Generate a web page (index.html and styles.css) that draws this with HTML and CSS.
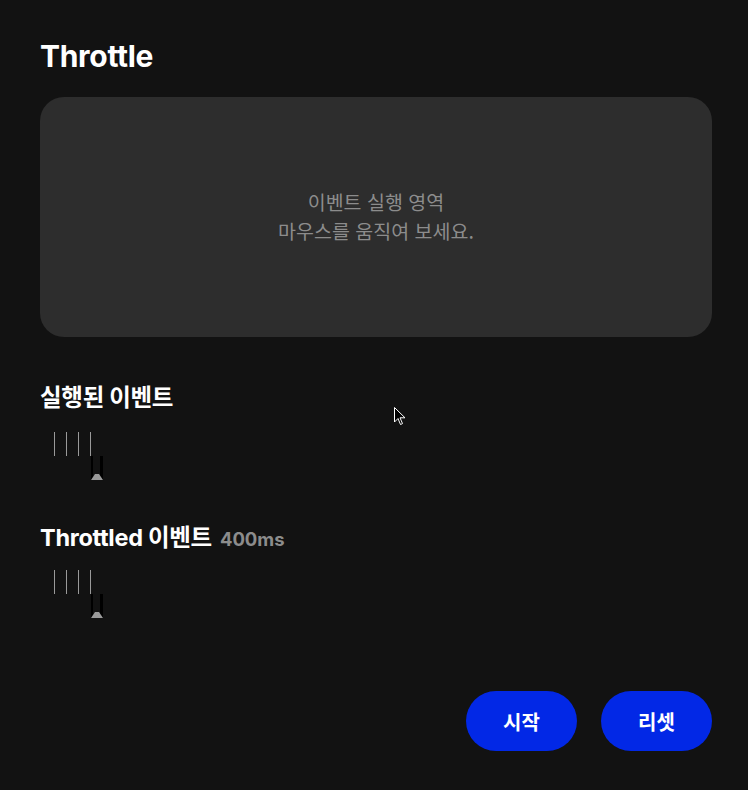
FILE: index.html
```html
<!DOCTYPE html>
<html lang="ko">
<head>
<meta charset="utf-8">
<link rel="stylesheet" href="styles.css">
</head>
<body>
<main class="page">
  <h1 class="title">Throttle</h1>
  <section class="area">
    <p>이벤트 실행 영역<br>마우스를 움직여 보세요.</p>
  </section>
  <section class="group">
    <h2 class="heading">실행된 이벤트</h2>
    <div class="track">
      <div class="ticks"><span></span><span></span><span></span><span></span></div>
      <div class="marker"><svg width="12" height="24" viewBox="0 0 12 24"><rect x="0" y="0" width="2" height="24" fill="#000"/><rect x="9" y="0" width="3" height="24" fill="#000"/><polygon points="4,18 8,18 12,24 0,24" fill="#9a9a9a"/></svg></div>
    </div>
  </section>
  <section class="group second">
    <h2 class="heading">Throttled 이벤트 <small>400ms</small></h2>
    <div class="track">
      <div class="ticks"><span></span><span></span><span></span><span></span></div>
      <div class="marker"><svg width="12" height="24" viewBox="0 0 12 24"><rect x="0" y="0" width="2" height="24" fill="#000"/><rect x="9" y="0" width="3" height="24" fill="#000"/><polygon points="4,18 8,18 12,24 0,24" fill="#9a9a9a"/></svg></div>
    </div>
  </section>
  <div class="actions">
    <button class="btn">시작</button>
    <button class="btn">리셋</button>
  </div>
</main>
<svg class="cursor" width="12" height="19" viewBox="0 0 12 19"><path d="M0.5 0.5 L0.5 15 L4 11.5 L6.5 17.5 L8.5 16.6 L6 10.8 L11 10.8 Z" fill="#000" stroke="#fff" stroke-width="1"/></svg>
</body>
</html>
```
FILE: styles.css
```css
html, body {
  margin: 0;
  padding: 0;
  background: #121212;
  color: #fff;
  font-family: Inter, "Noto Sans CJK KR", sans-serif;
}
.page {
  padding: 38px 36px 0 40px;
  display: flex;
  flex-direction: column;
}
.title {
  margin: 0;
  font-size: 30px;
  font-weight: 700;
  line-height: 36px;
  letter-spacing: -0.3px;
}
.area {
  margin-top: 23px;
  height: 240px;
  background: #2d2d2d;
  border-radius: 24px;
  display: flex;
  align-items: center;
  justify-content: center;
}
.area p {
  margin: 0 0 3px;
  text-align: center;
  color: #8c8c8c;
  font-size: 19.5px;
  line-height: 29px;
  font-family: "Noto Sans CJK KR", sans-serif;
}
.group {
  margin-top: 45px;
}
.group.second {
  margin-top: 42px;
}
.heading {
  margin: 0;
  font-size: 23.5px;
  font-weight: 700;
  line-height: 32px;
  display: flex;
  align-items: baseline;
  gap: 8px;
  letter-spacing: -0.3px;
}
.heading small {
  font-size: 18.5px;
  color: #8c8c8c;
  font-weight: 700;
  letter-spacing: 0;
}
.track {
  margin-top: 18px;
  padding-left: 14px;
  height: 48px;
  display: flex;
  flex-direction: column;
}
.second .track {
  margin-top: 15px;
}
.ticks {
  display: flex;
  gap: 11px;
  height: 24px;
}
.ticks span {
  width: 1px;
  height: 24px;
  background: #9a9a9a;
}
.marker {
  margin-left: 37px;
  width: 12px;
  height: 24px;
}
.marker svg { display: block; }
.actions {
  margin-top: 73px;
  display: flex;
  justify-content: flex-end;
  gap: 24px;
}
.btn {
  width: 111px;
  height: 60px;
  border: 0;
  border-radius: 30px;
  background: #0228e6;
  color: #fff;
  font-family: "Noto Sans CJK KR", sans-serif;
  font-size: 20px;
  font-weight: 700;
}
.cursor {
  position: absolute;
  left: 394px;
  top: 407px;
}
```
